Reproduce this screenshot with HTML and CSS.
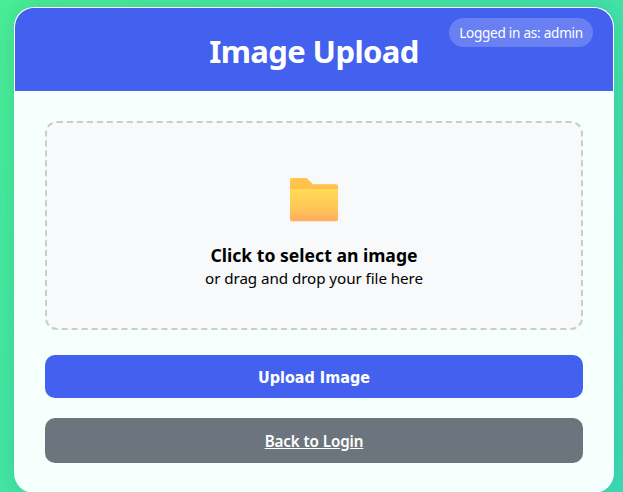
FILE: index.html
```html
<!DOCTYPE html>
<html lang="en">
<head>
<meta charset="utf-8">
<title>Image Upload</title>
<link rel="stylesheet" href="styles.css">
</head>
<body>
<main class="card">
  <header class="card-header">
    <h1 class="title">Image Upload</h1>
    <span class="user-badge">Logged in as: admin</span>
  </header>
  <section class="card-body">
    <div class="dropzone">
      <svg class="folder" width="50" height="46" viewBox="0 0 50 46" aria-hidden="true">
        <defs>
          <linearGradient id="folderBack" x1="0" y1="0" x2="0" y2="1">
            <stop offset="0" stop-color="#ffc64e"/>
            <stop offset="1" stop-color="#ffbb48"/>
          </linearGradient>
          <linearGradient id="folderFront" x1="0" y1="0" x2="0" y2="1">
            <stop offset="0" stop-color="#ffdc54"/>
            <stop offset="0.7" stop-color="#ffc159"/>
            <stop offset="1" stop-color="#ffa961"/>
          </linearGradient>
        </defs>
        <path d="M3 1H16C17.3 1 18.1 1.5 18.9 2.3L24 7.3H47C48.1 7.3 49 8.2 49 9.3V20H1V3C1 1.9 1.9 1 3 1Z" fill="url(#folderBack)"/>
        <path d="M1 13C1 12.4 1.9 12 3 12H47C48.1 12 49 12.4 49 13V42.3C49 43.4 48.1 44.3 47 44.3H3C1.9 44.3 1 43.4 1 42.3Z" fill="url(#folderFront)"/>
      </svg>
      <p class="drop-title">Click to select an image</p>
      <p class="drop-hint">or drag and drop your file here</p>
    </div>
    <button class="btn btn-primary" type="button">Upload Image</button>
    <a class="btn btn-secondary" href="#">Back to Login</a>
  </section>
</main>
</body>
</html>
```
FILE: styles.css
```css
* { box-sizing: border-box; }

html, body {
  height: 100%;
  margin: 0;
  overflow: hidden;
}

body {
  background: linear-gradient(135deg, #4aee97 0%, #3ddcb6 100%);
  padding: 7px 9px 0 14px;
  font-family: "Noto Sans", "Open Sans", sans-serif;
}

.card {
  width: 600px;
  height: 486px;
  background: #f5fffb;
  border-radius: 20px;
  overflow: hidden;
  box-shadow: 0 0 24px rgba(0, 60, 80, 0.16);
}

.card-header {
  position: relative;
  height: 84px;
  padding-top: 3px;
  background: #4361ee;
  border-top: 1px solid #fff;
  border-left: 1px solid #fff;
  border-right: 1px solid #fff;
  border-radius: 20px 20px 0 0;
  display: flex;
  align-items: center;
  justify-content: center;
}

.title {
  margin: 0;
  color: #fff;
  font-size: 31px;
  font-weight: 700;
  line-height: 44px;
  letter-spacing: -0.6px;
}

.user-badge {
  position: absolute;
  top: 10px;
  right: 20px;
  padding: 0 10px;
  height: 29px;
  line-height: 29px;
  border-radius: 15px;
  background: rgba(255, 255, 255, 0.2);
  color: #fff;
  font-size: 13.6px;
  letter-spacing: -0.27px;
}

.card-body {
  padding: 30px 31px 0;
  display: flex;
  flex-direction: column;
}

.dropzone {
  height: 209px;
  border: 2px dashed #ccc;
  border-radius: 12px;
  background: #f8f9fa;
  padding-top: 54px;
  display: flex;
  flex-direction: column;
  align-items: center;
  color: #000;
  margin-bottom: 25px;
}

.folder { display: block; margin-bottom: 20px; }

.drop-title {
  margin: 0;
  font-size: 17.6px;
  font-weight: 700;
  line-height: 24px;
}

.drop-hint {
  margin: 0;
  font-size: 15.2px;
  line-height: 22px;
  letter-spacing: -0.07px;
}

.btn {
  display: flex;
  align-items: center;
  justify-content: center;
  width: 100%;
  border: 0;
  border-radius: 10px;
  color: #fff;
  font-weight: 700;
  font-size: 16px;
}

.btn-primary {
  height: 43px;
  padding-top: 2px;
  background: #4361ee;
  margin-bottom: 20px;
  font-family: "DejaVu Sans", sans-serif;
  font-stretch: condensed;
}

.btn-secondary {
  height: 45px;
  background: #6c757d;
  font-weight: 600;
  font-size: 15.2px;
  letter-spacing: -0.1px;
  text-decoration: underline;
}
```
